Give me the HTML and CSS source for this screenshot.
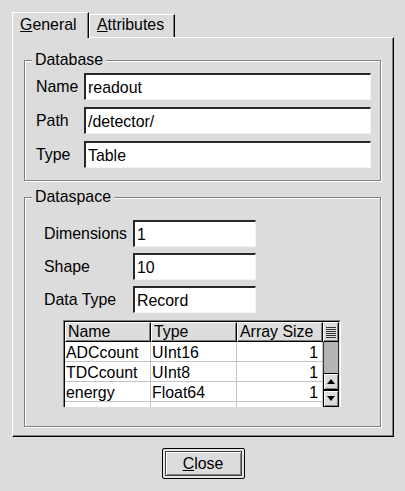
FILE: index.html
```html
<!DOCTYPE html>
<html>
<head>
<meta charset="utf-8">
<link rel="stylesheet" href="styles.css">
</head>
<body>
<div class="dialog">
  <div class="tabs">
    <div class="tab tab-active"><span class="mn">G</span>eneral</div>
    <div class="tab tab-inactive"><span class="mn">A</span>ttributes</div>
  </div>
  <div class="panel">
    <fieldset class="group group-db">
      <legend>Database</legend>
      <div class="form form-db">
        <span class="label">Name</span><div class="field">readout</div>
        <span class="label">Path</span><div class="field">/detector/</div>
        <span class="label">Type</span><div class="field">Table</div>
      </div>
    </fieldset>
    <fieldset class="group group-ds">
      <legend>Dataspace</legend>
      <div class="form form-ds">
        <span class="label">Dimensions</span><div class="field">1</div>
        <span class="label">Shape</span><div class="field">10</div>
        <span class="label">Data Type</span><div class="field">Record</div>
      </div>
      <div class="table">
        <div class="table-inner">
          <div class="cols">
            <div class="row head">
              <div class="hcell c-name">Name</div>
              <div class="hcell c-type">Type</div>
              <div class="hcell c-size">Array Size</div>
            </div>
            <div class="row">
              <div class="cell c-name">ADCcount</div>
              <div class="cell c-type">UInt16</div>
              <div class="cell c-size num">1</div>
            </div>
            <div class="row">
              <div class="cell c-name">TDCcount</div>
              <div class="cell c-type">UInt8</div>
              <div class="cell c-size num">1</div>
            </div>
            <div class="row">
              <div class="cell c-name">energy</div>
              <div class="cell c-type">Float64</div>
              <div class="cell c-size num">1</div>
            </div>
            <div class="row">
              <div class="cell c-name"></div>
              <div class="cell c-type"></div>
              <div class="cell c-size num"></div>
            </div>
          </div>
          <div class="scrollbar">
            <div class="sb-corner">
              <svg width="10" height="11" viewBox="0 0 10 11"><g stroke="#303030" stroke-width="1"><line x1="0" y1="0.5" x2="10" y2="0.5"/><line x1="0" y1="2.5" x2="10" y2="2.5"/><line x1="0" y1="4.5" x2="10" y2="4.5"/><line x1="0" y1="6.5" x2="10" y2="6.5"/><line x1="0" y1="8.5" x2="10" y2="8.5"/><line x1="0" y1="10.5" x2="10" y2="10.5"/></g></svg>
            </div>
            <div class="sb-trough"></div>
            <div class="sb-btn"><svg width="8" height="5" viewBox="0 0 8 5"><polygon points="4,0 8,5 0,5" fill="#000"/></svg></div>
            <div class="sb-btn"><svg width="8" height="5" viewBox="0 0 8 5"><polygon points="0,0 8,0 4,5" fill="#000"/></svg></div>
          </div>
        </div>
      </div>
    </fieldset>
  </div>
  <div class="actions">
    <button class="btn"><span class="btn-face"><span class="mn">C</span>lose</span></button>
  </div>
</div>
</body>
</html>
```
FILE: styles.css
```css
* { box-sizing: border-box; }
html, body { margin: 0; padding: 0; }
body {
  background: #dcdcdc;
  font-family: "Liberation Sans", Arial, sans-serif;
  font-size: 15.9px;
  color: #000;
  width: 405px;
  height: 491px;
  overflow: hidden;
}
.mn { text-decoration: underline; }
.dialog { padding: 12px 0 0 12px; }

.tabs {
  display: flex;
  align-items: flex-end;
  margin-bottom: -1px;
  position: relative;
  z-index: 1;
}
.tab {
  background: #dcdcdc;
  border-left: 1px solid #fff;
  border-top: 1px solid #fff;
  border-right: 1px solid #000;
  box-shadow: inset -1px 0 #808080;
  line-height: 18px;
  white-space: nowrap;
}
.tab-active { width: 77px; height: 26px; padding: 3px 0 0 7px; }
.tab-inactive { width: 86px; height: 23px; padding: 1px 0 0 7px; margin-bottom: 1px; }

.panel {
  width: 382px;
  height: 400px;
  border: 1px solid;
  border-color: #fff #000 #000 #fff;
  box-shadow: inset -1px -1px #808080;
  padding-top: 13px;
}

.group {
  margin: 0 12px 0 11px;
  border: 1px solid #808080;
  box-shadow: inset 1px 1px #fff, 1px 1px #fff;
  padding: 4px 8px 12px 7px;
  min-width: 0;
}
.group legend {
  padding: 0 3px;
  line-height: 18px;
  background: #dcdcdc;
}
.group-ds { margin-top: 7px; padding: 14px 8px 19px 7px; }

.form { display: grid; align-items: center; }
.form-db { grid-template-columns: 48px 287px; row-gap: 7px; margin-left: 4px; }
.form-ds { grid-template-columns: 89px 123px; row-gap: 6px; margin-left: 12px; }

.field {
  height: 27px;
  background: #fff;
  border-style: solid;
  border-width: 2px 1px 1px 2px;
  border-color: #282828 #f4f4f4 #f4f4f4 #282828;
  padding: 1px 2px 0;
  line-height: 23px;
  white-space: nowrap;
}

.table {
  margin: 7px 0 0 31px;
  width: 278px;
  height: 87px;
  border: 1px solid;
  border-bottom: 0;
  border-color: #808080 #fff #fff #808080;
  overflow: hidden;
}
.table-inner {
  height: 100%;
  border: 1px solid;
  border-bottom: 0;
  border-color: #000 #dcdcdc #dcdcdc #000;
  display: flex;
  background: #fff;
}
.cols { flex: 1; overflow: hidden; }
.row { display: flex; height: 20px; }
.c-name { width: 86px; }
.c-type { width: 86px; }
.c-size { width: 86px; }
.hcell {
  height: 20px;
  background: #dcdcdc;
  border-style: solid;
  border-width: 1px;
  border-color: #fff #000 #000 #fff;
  box-shadow: inset -1px -1px #808080;
  padding-left: 2px;
  line-height: 18px;
  white-space: nowrap;
  overflow: hidden;
}
.cell {
  height: 20px;
  border-right: 1px solid #c4c4c4;
  border-bottom: 1px solid #c4c4c4;
  padding: 3px 0 0 1px;
  line-height: 16px;
  white-space: nowrap;
}
.num { text-align: right; padding-right: 4px; }

.scrollbar {
  width: 16px;
  display: flex;
  flex-direction: column;
  background: #b4b4b4;
}
.sb-corner {
  height: 20px;
  background: #dcdcdc;
  border: 1px solid;
  border-color: #fff #000 #000 #fff;
  box-shadow: inset -1px -1px #808080;
  display: flex;
  align-items: center;
  justify-content: center;
}
.sb-trough {
  height: 31px;
  border-left: 1px solid #303030;
  border-right: 1px solid #303030;
}
.sb-btn {
  height: 17px;
  background: #dcdcdc;
  border: 1px solid #000;
  box-shadow: inset 1px 1px #fff, inset -1px -1px #808080;
  display: flex;
  align-items: center;
  justify-content: center;
}

.actions {
  width: 382px;
  margin-top: 11px;
  display: flex;
  justify-content: center;
}
.btn {
  width: 83px;
  height: 31px;
  border: 1px solid #000;
  border-radius: 2px;
  padding: 2px;
  background: #e4e4e4;
  font: inherit;
  color: #000;
  margin: 0;
}
.btn-face {
  display: block;
  height: 100%;
  border: 1px solid #404040;
  box-shadow: inset 1px 1px #fff, inset -1px -1px #808080;
  background: #dcdcdc;
  line-height: 23px;
  text-align: center;
}
```
